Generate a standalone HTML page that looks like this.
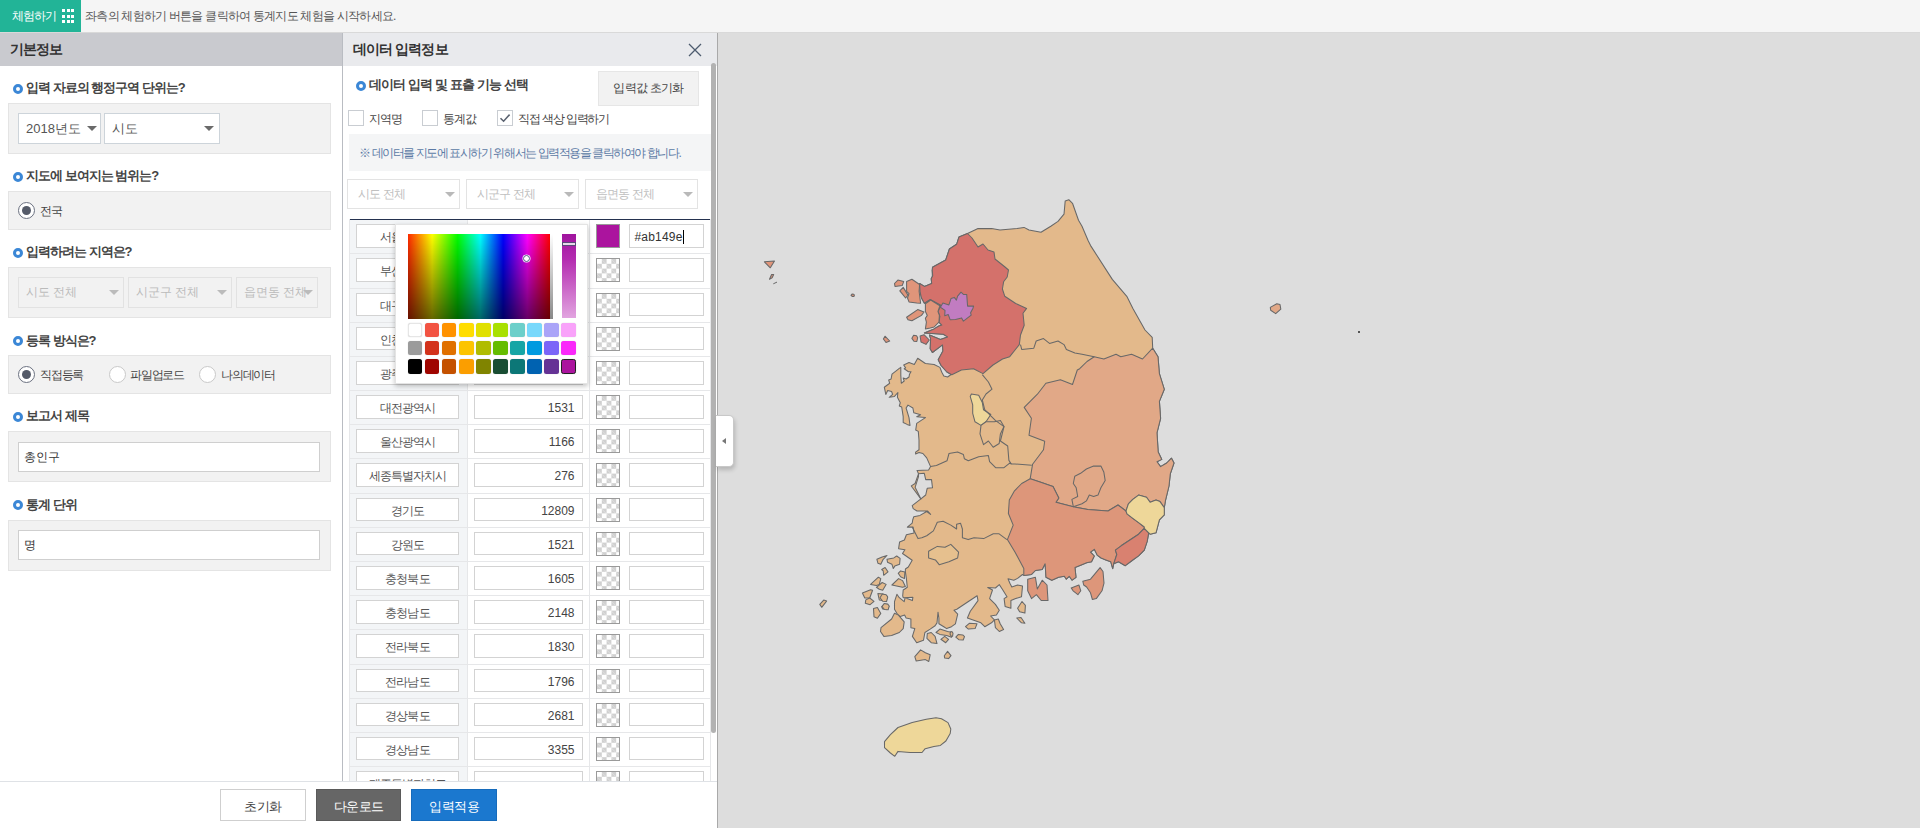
<!DOCTYPE html>
<html><head><meta charset="utf-8">
<style>
*{box-sizing:border-box;margin:0;padding:0}
html,body{width:1920px;height:828px;overflow:hidden;background:#dddddd;font-family:"Liberation Sans",sans-serif;color:#333}
.a{position:absolute}
#top{left:0;top:0;width:1920px;height:33px;background:#f5f5f5;border-bottom:1px solid #d9d9d9}
#exp{left:0;top:0;width:81px;height:32px;background:#22b497;color:#fff;font-size:12px;line-height:32px;padding-left:12px;letter-spacing:-1px}
.g{width:3px;height:3px;background:#fff}
#msg{left:85px;top:0;line-height:32px;font-size:12px;color:#555;letter-spacing:-0.75px}
#left{left:0;top:33px;width:342px;height:748px;background:#fff}
#lhead{left:0;top:33px;width:342px;height:33px;background:#c9cacf;font-size:14px;font-weight:bold;line-height:33px;padding-left:10px;color:#333;letter-spacing:-0.9px}
#vline{left:342px;top:33px;width:1px;height:748px;background:#b9bcc2}
#data{left:343px;top:33px;width:374px;height:748px;background:#fff}
#dhead{left:343px;top:33px;width:374px;height:33px;background:#e9eaed;font-size:14px;font-weight:bold;line-height:33px;padding-left:10px;color:#333;letter-spacing:-0.9px}
#rline{left:717px;top:33px;width:1px;height:795px;background:#a9a9a9}
.tt{font-size:13px;font-weight:bold;color:#444;letter-spacing:-1px;line-height:16px;white-space:nowrap}
.bul{width:10px;height:10px;border-radius:50%;border:3px solid #3b87d6;background:#fff}
.box{background:#f2f2f2;border:1px solid #e4e4e4}
.sel{background:#fff;border:1px solid #cdd4da;font-size:13px;color:#555;line-height:29px;padding-left:7px;white-space:nowrap}
.sel.dis{background:#f2f2f2;border-color:#e2e2e2;color:#bbb}
.arr{width:0;height:0;border-left:5px solid transparent;border-right:5px solid transparent;border-top:5.5px solid #6a6a6a;margin-left:-1px}
.dis .arr{border-top-color:#bbb}
.rad{width:17px;height:17px;border-radius:50%;border:1px solid #c9c9c9;background:#fff}
.rad.on{border:1.5px solid #6b7180}
.rad.on::after{content:"";position:absolute;left:2.5px;top:2.5px;width:9px;height:9px;border-radius:50%;background:#555b69}
.lbl{font-size:12px;color:#444;line-height:14px;white-space:nowrap;letter-spacing:-1.2px}
.inp{background:#fff;border:1px solid #cfcfcf;font-size:12px;color:#333;line-height:28px;padding-left:5px}
#bot{left:0;top:781px;width:717px;height:47px;background:#fff;border-top:1px solid #dfe2e6}
.btn{height:32px;font-size:13px;line-height:33px;text-align:center;letter-spacing:-0.5px}
.chk{width:16.4px;height:16px;background:#fff;border:1px solid #c9cdd2}
.dis2{background:#fff;border-color:#e3e3e3;color:#c0c0c0;font-size:12px;padding-left:10px;letter-spacing:-0.8px}
.dis2 .arr{border-top-color:#b9b9b9}
.cell{height:23.6px;background:#fff;border:1px solid #d3d3d3;font-size:12px;line-height:24px;text-align:center;color:#555;letter-spacing:-0.9px;white-space:nowrap;overflow:hidden}
.num{text-align:right;padding-right:7px;letter-spacing:0;color:#444;line-height:25.5px}
.chq{width:24px;height:24px;border:1px solid #9a9a9a;background-color:#fff;background-image:linear-gradient(45deg,#d0d0d0 25%,transparent 25%,transparent 75%,#d0d0d0 75%),linear-gradient(45deg,#d0d0d0 25%,transparent 25%,transparent 75%,#d0d0d0 75%);background-size:9.6px 9.6px;background-position:0 0,4.8px 4.8px}
</style></head><body>
<div id="top" class="a"></div>
<div id="exp" class="a">체험하기</div>
<div class="a g" style="left:62px;top:9px"></div><div class="a g" style="left:66.7px;top:9px"></div><div class="a g" style="left:71.4px;top:9px"></div>
<div class="a g" style="left:62px;top:14.7px"></div><div class="a g" style="left:66.7px;top:14.7px"></div><div class="a g" style="left:71.4px;top:14.7px"></div>
<div class="a g" style="left:62px;top:20.3px"></div><div class="a g" style="left:66.7px;top:20.3px"></div><div class="a g" style="left:71.4px;top:20.3px"></div>
<div id="msg" class="a">좌측의 체험하기 버튼을 클릭하여 통계지도 체험을 시작하세요.</div>

<div id="left" class="a"></div>
<div id="lhead" class="a">기본정보</div>
<div id="vline" class="a"></div>

<!-- section 1 -->
<div class="a bul" style="left:13px;top:83.5px"></div>
<div class="a tt" style="left:26px;top:80px">입력 자료의 행정구역 단위는?</div>
<div class="a box" style="left:8px;top:103px;width:323px;height:51px"></div>
<div class="a sel" style="left:18px;top:113px;width:83px;height:31px">2018년도<div class="a arr" style="left:69px;top:12px"></div></div>
<div class="a sel" style="left:104px;top:113px;width:116px;height:31px">시도<div class="a arr" style="left:100px;top:12px"></div></div>

<!-- section 2 -->
<div class="a bul" style="left:13px;top:171.5px"></div>
<div class="a tt" style="left:26px;top:168px">지도에 보여지는 범위는?</div>
<div class="a box" style="left:8px;top:191px;width:323px;height:39px"></div>
<div class="a rad on" style="left:18px;top:202px"></div>
<div class="a lbl" style="left:40px;top:204px">전국</div>

<!-- section 3 -->
<div class="a bul" style="left:13px;top:247.5px"></div>
<div class="a tt" style="left:26px;top:244px">입력하려는 지역은?</div>
<div class="a box" style="left:8px;top:267px;width:323px;height:51px"></div>
<div class="a sel dis" style="left:18px;top:277px;width:106px;height:31px;font-size:12px">시도 전체<div class="a arr" style="left:91px;top:12px"></div></div>
<div class="a sel dis" style="left:128px;top:277px;width:104px;height:31px;font-size:12px">시군구 전체<div class="a arr" style="left:89px;top:12px"></div></div>
<div class="a sel dis" style="left:236px;top:277px;width:82px;height:31px;font-size:12px">읍면동 전체<div class="a arr" style="left:67px;top:12px"></div></div>

<!-- section 4 -->
<div class="a bul" style="left:13px;top:336px"></div>
<div class="a tt" style="left:26px;top:333px">등록 방식은?</div>
<div class="a box" style="left:8px;top:355px;width:323px;height:39px"></div>
<div class="a rad on" style="left:18px;top:366px"></div>
<div class="a lbl" style="left:40px;top:368px">직접등록</div>
<div class="a rad" style="left:109px;top:366px"></div>
<div class="a lbl" style="left:130px;top:368px">파일업로드</div>
<div class="a rad" style="left:199px;top:366px"></div>
<div class="a lbl" style="left:221px;top:368px">나의데이터</div>

<!-- section 5 -->
<div class="a bul" style="left:13px;top:411.5px"></div>
<div class="a tt" style="left:26px;top:408px">보고서 제목</div>
<div class="a box" style="left:8px;top:431px;width:323px;height:51px"></div>
<div class="a inp" style="left:18px;top:442px;width:302px;height:30px">총인구</div>

<!-- section 6 -->
<div class="a bul" style="left:13px;top:500px"></div>
<div class="a tt" style="left:26px;top:497px">통계 단위</div>
<div class="a box" style="left:8px;top:520px;width:323px;height:51px"></div>
<div class="a inp" style="left:18px;top:530px;width:302px;height:30px">명</div>

<!-- DATA PANEL -->
<div id="data" class="a"></div>
<div id="dhead" class="a">데이터 입력정보</div>
<div id="rline" class="a"></div>
<!--DATA-->
<div class="a bul" style="left:356px;top:80.6px"></div>
<div class="a tt" style="left:368.5px;top:77px;letter-spacing:-0.85px">데이터 입력 및 표출 기능 선택</div>
<div class="a btn" style="left:598px;top:71px;width:101px;height:35px;line-height:33px;background:#f2f2f2;border:1px solid #e6e6e6;color:#444;font-size:12px;letter-spacing:-0.7px">입력값 초기화</div>
<div class="a chk" style="left:348px;top:110px"></div>
<div class="a lbl" style="left:369px;top:112px">지역명</div>
<div class="a chk" style="left:422px;top:110px"></div>
<div class="a lbl" style="left:443.4px;top:112px">통계값</div>
<div class="a chk" style="left:497px;top:110px"></div>
<svg class="a" style="left:497px;top:110px" width="16" height="16"><path d="M3.5 8.2 L6.6 11.2 L12.6 4.6" fill="none" stroke="#5a6270" stroke-width="1.6"/></svg>
<div class="a lbl" style="left:518.3px;top:112px">직접 색상 입력하기</div>
<div class="a" style="left:349px;top:134.4px;width:362px;height:36.2px;background:#f4f5f6"></div>
<div class="a lbl" style="left:359.3px;top:146px;color:#5b7aa5;letter-spacing:-1.45px">※ 데이터를 지도에 표시하기 위해서는 입력적용을 클릭하여야 합니다.</div>
<div class="a sel dis2" style="left:347px;top:179.3px;width:113px;height:30.2px">시도 전체<div class="a arr" style="left:98px;top:12px"></div></div>
<div class="a sel dis2" style="left:466px;top:179.3px;width:113px;height:30.2px">시군구 전체<div class="a arr" style="left:98px;top:12px"></div></div>
<div class="a sel dis2" style="left:584.5px;top:179.3px;width:113px;height:30.2px">읍면동 전체<div class="a arr" style="left:98px;top:12px"></div></div>
<div class="a" style="left:349px;top:219.2px;width:362px;height:562px;background:#fff;border-left:1px solid #e6e7e9;border-right:1px solid #e6e7e9;overflow:hidden">
<div class="a" style="left:0;top:0;width:117px;height:600px;background:#f3f5f7"></div>
<div class="a" style="left:117px;top:0;width:1px;height:600px;background:#e6e7e9"></div>
<div class="a" style="left:239px;top:0;width:1px;height:600px;background:#e6e7e9"></div>
<div class="a" style="left:0;top:0;width:362px;height:1.3px;background:#24324f"></div>
<div class="a cell" style="left:6.3px;top:5.00px;width:102.4px">서울특별시</div>
<div class="a cell num" style="left:123.5px;top:5.00px;width:109px"></div>
<div class="a" style="left:246px;top:5.00px;width:24px;height:24px;background:#ab149e;border:1px solid #999"></div>
<div class="a cell" style="left:278.5px;top:5.00px;width:75.5px;text-align:left;padding-left:5px;color:#333;letter-spacing:0.2px;line-height:24px">#ab149e<span style="display:inline-block;width:1px;height:14px;background:#000;vertical-align:-3px"></span></div>
<div class="a" style="left:0;top:34.18px;width:362px;height:1px;background:#e6e7e9"></div>
<div class="a cell" style="left:6.3px;top:39.18px;width:102.4px">부산광역시</div>
<div class="a cell num" style="left:123.5px;top:39.18px;width:109px"></div>
<div class="a chq" style="left:246px;top:39.18px"></div>
<div class="a cell" style="left:278.5px;top:39.18px;width:75.5px"></div>
<div class="a" style="left:0;top:68.36px;width:362px;height:1px;background:#e6e7e9"></div>
<div class="a cell" style="left:6.3px;top:73.36px;width:102.4px">대구광역시</div>
<div class="a cell num" style="left:123.5px;top:73.36px;width:109px"></div>
<div class="a chq" style="left:246px;top:73.36px"></div>
<div class="a cell" style="left:278.5px;top:73.36px;width:75.5px"></div>
<div class="a" style="left:0;top:102.54px;width:362px;height:1px;background:#e6e7e9"></div>
<div class="a cell" style="left:6.3px;top:107.54px;width:102.4px">인천광역시</div>
<div class="a cell num" style="left:123.5px;top:107.54px;width:109px"></div>
<div class="a chq" style="left:246px;top:107.54px"></div>
<div class="a cell" style="left:278.5px;top:107.54px;width:75.5px"></div>
<div class="a" style="left:0;top:136.72px;width:362px;height:1px;background:#e6e7e9"></div>
<div class="a cell" style="left:6.3px;top:141.72px;width:102.4px">광주광역시</div>
<div class="a cell num" style="left:123.5px;top:141.72px;width:109px"></div>
<div class="a chq" style="left:246px;top:141.72px"></div>
<div class="a cell" style="left:278.5px;top:141.72px;width:75.5px"></div>
<div class="a" style="left:0;top:170.90px;width:362px;height:1px;background:#e6e7e9"></div>
<div class="a cell" style="left:6.3px;top:175.90px;width:102.4px">대전광역시</div>
<div class="a cell num" style="left:123.5px;top:175.90px;width:109px">1531</div>
<div class="a chq" style="left:246px;top:175.90px"></div>
<div class="a cell" style="left:278.5px;top:175.90px;width:75.5px"></div>
<div class="a" style="left:0;top:205.08px;width:362px;height:1px;background:#e6e7e9"></div>
<div class="a cell" style="left:6.3px;top:210.08px;width:102.4px">울산광역시</div>
<div class="a cell num" style="left:123.5px;top:210.08px;width:109px">1166</div>
<div class="a chq" style="left:246px;top:210.08px"></div>
<div class="a cell" style="left:278.5px;top:210.08px;width:75.5px"></div>
<div class="a" style="left:0;top:239.26px;width:362px;height:1px;background:#e6e7e9"></div>
<div class="a cell" style="left:6.3px;top:244.26px;width:102.4px">세종특별자치시</div>
<div class="a cell num" style="left:123.5px;top:244.26px;width:109px">276</div>
<div class="a chq" style="left:246px;top:244.26px"></div>
<div class="a cell" style="left:278.5px;top:244.26px;width:75.5px"></div>
<div class="a" style="left:0;top:273.44px;width:362px;height:1px;background:#e6e7e9"></div>
<div class="a cell" style="left:6.3px;top:278.44px;width:102.4px">경기도</div>
<div class="a cell num" style="left:123.5px;top:278.44px;width:109px">12809</div>
<div class="a chq" style="left:246px;top:278.44px"></div>
<div class="a cell" style="left:278.5px;top:278.44px;width:75.5px"></div>
<div class="a" style="left:0;top:307.62px;width:362px;height:1px;background:#e6e7e9"></div>
<div class="a cell" style="left:6.3px;top:312.62px;width:102.4px">강원도</div>
<div class="a cell num" style="left:123.5px;top:312.62px;width:109px">1521</div>
<div class="a chq" style="left:246px;top:312.62px"></div>
<div class="a cell" style="left:278.5px;top:312.62px;width:75.5px"></div>
<div class="a" style="left:0;top:341.80px;width:362px;height:1px;background:#e6e7e9"></div>
<div class="a cell" style="left:6.3px;top:346.80px;width:102.4px">충청북도</div>
<div class="a cell num" style="left:123.5px;top:346.80px;width:109px">1605</div>
<div class="a chq" style="left:246px;top:346.80px"></div>
<div class="a cell" style="left:278.5px;top:346.80px;width:75.5px"></div>
<div class="a" style="left:0;top:375.98px;width:362px;height:1px;background:#e6e7e9"></div>
<div class="a cell" style="left:6.3px;top:380.98px;width:102.4px">충청남도</div>
<div class="a cell num" style="left:123.5px;top:380.98px;width:109px">2148</div>
<div class="a chq" style="left:246px;top:380.98px"></div>
<div class="a cell" style="left:278.5px;top:380.98px;width:75.5px"></div>
<div class="a" style="left:0;top:410.16px;width:362px;height:1px;background:#e6e7e9"></div>
<div class="a cell" style="left:6.3px;top:415.16px;width:102.4px">전라북도</div>
<div class="a cell num" style="left:123.5px;top:415.16px;width:109px">1830</div>
<div class="a chq" style="left:246px;top:415.16px"></div>
<div class="a cell" style="left:278.5px;top:415.16px;width:75.5px"></div>
<div class="a" style="left:0;top:444.34px;width:362px;height:1px;background:#e6e7e9"></div>
<div class="a cell" style="left:6.3px;top:449.34px;width:102.4px">전라남도</div>
<div class="a cell num" style="left:123.5px;top:449.34px;width:109px">1796</div>
<div class="a chq" style="left:246px;top:449.34px"></div>
<div class="a cell" style="left:278.5px;top:449.34px;width:75.5px"></div>
<div class="a" style="left:0;top:478.52px;width:362px;height:1px;background:#e6e7e9"></div>
<div class="a cell" style="left:6.3px;top:483.52px;width:102.4px">경상북도</div>
<div class="a cell num" style="left:123.5px;top:483.52px;width:109px">2681</div>
<div class="a chq" style="left:246px;top:483.52px"></div>
<div class="a cell" style="left:278.5px;top:483.52px;width:75.5px"></div>
<div class="a" style="left:0;top:512.70px;width:362px;height:1px;background:#e6e7e9"></div>
<div class="a cell" style="left:6.3px;top:517.70px;width:102.4px">경상남도</div>
<div class="a cell num" style="left:123.5px;top:517.70px;width:109px">3355</div>
<div class="a chq" style="left:246px;top:517.70px"></div>
<div class="a cell" style="left:278.5px;top:517.70px;width:75.5px"></div>
<div class="a" style="left:0;top:546.88px;width:362px;height:1px;background:#e6e7e9"></div>
<div class="a cell" style="left:6.3px;top:551.88px;width:102.4px">제주특별자치도</div>
<div class="a cell num" style="left:123.5px;top:551.88px;width:109px"></div>
<div class="a chq" style="left:246px;top:551.88px"></div>
<div class="a cell" style="left:278.5px;top:551.88px;width:75.5px"></div>
</div>
<div class="a" style="left:711.2px;top:63px;width:4.8px;height:670px;background:#b2b2b2;border-radius:3px"></div>
<div class="a" style="left:716px;top:414.5px;width:17.8px;height:52px;background:#fff;border:1px solid #c8c8c8;border-left:none;border-radius:0 5px 5px 0;box-shadow:1px 3px 4px rgba(0,0,0,0.18)"></div>
<div class="a" style="left:721.5px;top:437.5px;width:0;height:0;border-top:3.5px solid transparent;border-bottom:3.5px solid transparent;border-right:4px solid #777"></div>
<svg class="a" style="left:688px;top:43px" width="14" height="14"><path d="M1 1L13 13M13 1L1 13" stroke="#4d5b6e" stroke-width="1.3"/></svg>
<div class="a" style="left:395px;top:224.2px;width:192.5px;height:160px;background:#fff;border:1px solid #e4e4e4;box-shadow:0 2px 5px rgba(0,0,0,0.25)"></div>
<div class="a" style="left:407.7px;top:233.6px;width:142.3px;height:85px;background:linear-gradient(to bottom,rgba(0,0,0,0),rgba(0,0,0,0.6)),linear-gradient(to right,#ff2a00 0%,#ffff00 17%,#00ff00 35%,#00ffff 51%,#0000ff 67%,#ff00ff 84%,#ff0000 100%)"></div>
<div class="a" style="left:550px;top:233.6px;width:2.5px;height:85px;background:linear-gradient(to bottom,#fff,#888)"></div>
<div class="a" style="left:523.4px;top:255.3px;width:7px;height:7px;border-radius:50%;border:1.5px solid #5a4a8a;background:#fff;box-shadow:0 0 0 0.5px #fff"></div>
<div class="a" style="left:561.9px;top:233.6px;width:14px;height:84.4px;background:linear-gradient(to bottom,#a0149e,#b42cb0 30%,#e2a4e0)"></div>
<div class="a" style="left:561.5px;top:242.3px;width:14.8px;height:3.4px;background:#e8d8ea;border:1px solid #5a4a7a"></div>
<div class="a" style="left:407.70px;top:322.9px;width:14.6px;height:14.6px;border-radius:2.5px;background:#ffffff;box-shadow:0 0 1px rgba(0,0,0,0.25);border:1px solid #e6e6e6;"></div>
<div class="a" style="left:424.78px;top:322.9px;width:14.6px;height:14.6px;border-radius:2.5px;background:#f25342;box-shadow:0 0 1px rgba(0,0,0,0.25);"></div>
<div class="a" style="left:441.86px;top:322.9px;width:14.6px;height:14.6px;border-radius:2.5px;background:#ff9200;box-shadow:0 0 1px rgba(0,0,0,0.25);"></div>
<div class="a" style="left:458.94px;top:322.9px;width:14.6px;height:14.6px;border-radius:2.5px;background:#ffdd00;box-shadow:0 0 1px rgba(0,0,0,0.25);"></div>
<div class="a" style="left:476.02px;top:322.9px;width:14.6px;height:14.6px;border-radius:2.5px;background:#e0e000;box-shadow:0 0 1px rgba(0,0,0,0.25);"></div>
<div class="a" style="left:493.10px;top:322.9px;width:14.6px;height:14.6px;border-radius:2.5px;background:#a8e000;box-shadow:0 0 1px rgba(0,0,0,0.25);"></div>
<div class="a" style="left:510.18px;top:322.9px;width:14.6px;height:14.6px;border-radius:2.5px;background:#6ccfca;box-shadow:0 0 1px rgba(0,0,0,0.25);"></div>
<div class="a" style="left:527.26px;top:322.9px;width:14.6px;height:14.6px;border-radius:2.5px;background:#78d8fb;box-shadow:0 0 1px rgba(0,0,0,0.25);"></div>
<div class="a" style="left:544.34px;top:322.9px;width:14.6px;height:14.6px;border-radius:2.5px;background:#aaa4f8;box-shadow:0 0 1px rgba(0,0,0,0.25);"></div>
<div class="a" style="left:561.42px;top:322.9px;width:14.6px;height:14.6px;border-radius:2.5px;background:#f9a2fa;box-shadow:0 0 1px rgba(0,0,0,0.25);"></div>
<div class="a" style="left:407.70px;top:340.8px;width:14.6px;height:14.6px;border-radius:2.5px;background:#9b9b9b;box-shadow:0 0 1px rgba(0,0,0,0.25);"></div>
<div class="a" style="left:424.78px;top:340.8px;width:14.6px;height:14.6px;border-radius:2.5px;background:#d3321b;box-shadow:0 0 1px rgba(0,0,0,0.25);"></div>
<div class="a" style="left:441.86px;top:340.8px;width:14.6px;height:14.6px;border-radius:2.5px;background:#e07000;box-shadow:0 0 1px rgba(0,0,0,0.25);"></div>
<div class="a" style="left:458.94px;top:340.8px;width:14.6px;height:14.6px;border-radius:2.5px;background:#fcc400;box-shadow:0 0 1px rgba(0,0,0,0.25);"></div>
<div class="a" style="left:476.02px;top:340.8px;width:14.6px;height:14.6px;border-radius:2.5px;background:#b0bc00;box-shadow:0 0 1px rgba(0,0,0,0.25);"></div>
<div class="a" style="left:493.10px;top:340.8px;width:14.6px;height:14.6px;border-radius:2.5px;background:#64bc00;box-shadow:0 0 1px rgba(0,0,0,0.25);"></div>
<div class="a" style="left:510.18px;top:340.8px;width:14.6px;height:14.6px;border-radius:2.5px;background:#16a5a5;box-shadow:0 0 1px rgba(0,0,0,0.25);"></div>
<div class="a" style="left:527.26px;top:340.8px;width:14.6px;height:14.6px;border-radius:2.5px;background:#009ae0;box-shadow:0 0 1px rgba(0,0,0,0.25);"></div>
<div class="a" style="left:544.34px;top:340.8px;width:14.6px;height:14.6px;border-radius:2.5px;background:#7b65f8;box-shadow:0 0 1px rgba(0,0,0,0.25);"></div>
<div class="a" style="left:561.42px;top:340.8px;width:14.6px;height:14.6px;border-radius:2.5px;background:#fa28fa;box-shadow:0 0 1px rgba(0,0,0,0.25);"></div>
<div class="a" style="left:407.70px;top:359.1px;width:14.6px;height:14.6px;border-radius:2.5px;background:#000000;box-shadow:0 0 1px rgba(0,0,0,0.25);"></div>
<div class="a" style="left:424.78px;top:359.1px;width:14.6px;height:14.6px;border-radius:2.5px;background:#9f0500;box-shadow:0 0 1px rgba(0,0,0,0.25);"></div>
<div class="a" style="left:441.86px;top:359.1px;width:14.6px;height:14.6px;border-radius:2.5px;background:#c45100;box-shadow:0 0 1px rgba(0,0,0,0.25);"></div>
<div class="a" style="left:458.94px;top:359.1px;width:14.6px;height:14.6px;border-radius:2.5px;background:#fb9e00;box-shadow:0 0 1px rgba(0,0,0,0.25);"></div>
<div class="a" style="left:476.02px;top:359.1px;width:14.6px;height:14.6px;border-radius:2.5px;background:#808400;box-shadow:0 0 1px rgba(0,0,0,0.25);"></div>
<div class="a" style="left:493.10px;top:359.1px;width:14.6px;height:14.6px;border-radius:2.5px;background:#194d33;box-shadow:0 0 1px rgba(0,0,0,0.25);"></div>
<div class="a" style="left:510.18px;top:359.1px;width:14.6px;height:14.6px;border-radius:2.5px;background:#0c7777;box-shadow:0 0 1px rgba(0,0,0,0.25);"></div>
<div class="a" style="left:527.26px;top:359.1px;width:14.6px;height:14.6px;border-radius:2.5px;background:#0062b1;box-shadow:0 0 1px rgba(0,0,0,0.25);"></div>
<div class="a" style="left:544.34px;top:359.1px;width:14.6px;height:14.6px;border-radius:2.5px;background:#653295;box-shadow:0 0 1px rgba(0,0,0,0.25);"></div>
<div class="a" style="left:561.42px;top:359.1px;width:14.6px;height:14.6px;border-radius:2.5px;background:#ab149e;box-shadow:0 0 1px rgba(0,0,0,0.25);border:1.5px solid #222;"></div>
<!--/DATA-->

<div id="bot" class="a"></div>
<div class="a btn" style="left:220px;top:789px;width:86px;background:#fff;border:1px solid #cfcfcf;color:#444">초기화</div>
<div class="a btn" style="left:316px;top:789px;width:85px;background:#666;color:#fff;border:1px solid #5a5a5a">다운로드</div>
<div class="a btn" style="left:411px;top:789px;width:86px;background:#1b78cf;color:#fff;border:1px solid #166bbb">입력적용</div>

<!--MAP-->
<svg class="a" style="left:0;top:0" width="1920" height="828" viewBox="0 0 1920 828"><g stroke="#686868" stroke-width="1.05" stroke-linejoin="round">
<polygon points="932.5,283 932.5,267.3 945.7,260 949.4,249 956.6,244.3 959,237 967.5,233.5 978,228.6 991.6,228.6 1000,230 1017,228.6 1024,227.4 1029,230 1041,232.3 1050.8,226.2 1058,221.4 1064,214.2 1065.2,200.9 1068.8,199.7 1072.5,203.3 1078.5,220.2 1082,226.2 1088.2,240.7 1090.6,245.6 1112.3,279.4 1126.8,296.3 1132.9,308.4 1145,330 1152.2,337.3 1152.7,348.2 1158,356.7 1159.4,373.6 1164.3,389.3 1159.4,401.4 1160.6,418.3 1157,432.8 1158.2,452.1 1161.8,459.4 1157,461.8 1160.6,466.6 1166.7,463 1171.5,458.2 1174,463 1170.3,473.9 1169,486 1165.5,500.4 1164.3,507.7 1164.3,514.9 1159.4,519.8 1156,532.8 1150.1,534.2 1148.7,532.8 1147.2,541.4 1144.3,550.1 1138.6,555.9 1132.8,560 1125.3,565.7 1118.5,561.8 1113.7,563.8 1112.7,568.6 1110.8,561.8 1105.9,559.9 1101.1,558 1097.2,555.1 1094.3,549.3 1090.5,552.2 1094.3,556 1091.5,561.8 1086.6,562.8 1081.8,564.7 1075,567.6 1076,577.3 1072.1,580.2 1069.2,576.3 1066.3,579.2 1064.4,576.3 1058.6,577.3 1051.8,580.2 1046,577.3 1045.1,563.8 1042.2,569.6 1035.4,570.5 1031.5,574.4 1023.8,575.4 1022.5,574.5 1017.6,578.4 1013.8,580.3 1008,578.8 1009.9,583.2 1011.8,587 1017.6,585.1 1022.5,586.1 1021.5,596.7 1015.7,598.6 1010.9,600.6 1010.9,608.3 1005.1,606.4 1004.1,598.6 1007,596.7 1002.2,589 999.3,584.6 995.4,588 987.7,587.5 992.5,590 989.6,598.6 995.4,604.4 999.3,610.2 996.4,615.1 990.6,616 994.4,619.9 991.5,622.8 984.8,626.7 980.9,622.8 967.4,618 970.3,611.2 978,600.6 977.1,595.7 968.4,601.5 956.8,609.3 953.9,610.2 957.7,614.1 955.4,623.8 951.5,626.7 946.7,628.6 943.8,626.7 938.9,623.8 938.9,618 938,612.2 937,622.9 935.1,625.7 930.2,629.1 924.9,632.5 923.5,640.2 916.7,642.7 912.4,636.4 914.8,628.6 910.9,627.7 910.9,619 906.1,618 904.6,615.1 900.3,616.6 897.4,614.2 894.5,609.3 894.5,601.6 896.9,594.3 899.3,597.7 904.2,601.6 905.1,597.7 912.4,600.6 912.9,597.2 903.2,597.7 902.7,595.8 903.2,590 904.4,589.3 907.3,587.3 906.4,578.6 905.4,571.9 905.4,569 908.3,567 912.2,560.3 902.5,553.5 904.9,549.7 898.6,548.7 899.6,541.9 904.4,540 906.4,534.8 914.1,532.9 913.1,527.1 907.3,527.1 912.2,523.2 912.7,520 913.7,516.8 920,515.4 926.7,511.5 930.6,514.4 927.7,511 917,511 913.2,508.6 912.2,505.7 920.9,498.9 912.2,487.3 911.3,485.9 915.1,483.5 918.5,473.8 917,470.4 928.6,470 930.6,466.6 926.7,457.9 922.9,453.5 919,452.6 915.6,454 915.6,452.1 919,449.7 919,440 918.3,431.4 915.7,430 916.7,423.4 925.4,417.6 916.7,416.7 920.6,414.7 913.8,412.8 912.9,408 908,405.1 906.1,408 909,417.6 910,425.4 907.1,424.4 903.2,422.5 903.2,416.7 901.7,407 899.3,406 900.3,402.7 897.4,397.3 897.9,392.5 894.5,396.4 889.2,397.3 892.6,394.4 891.6,391.5 887.7,390.6 885.8,394.4 884.3,387.2 889.7,383.3 888.7,380 891.1,379 892,374.2 899.3,368.4 900.8,367.4 900.8,375.1 901.3,383.3 904.2,381 903.2,378 906.1,379 909,377 909.5,374.2 911,371.7 908.5,371.7 904.2,368.8 905.6,367.9 903.7,365 909,362.6 914.3,364.5 917.7,358.2 925.4,363.5 934.1,364.5 939.9,367.4 941.8,372.2 943.8,376.1 947.6,377 951.5,374.2 952,373.5 951.2,374.2 946.9,372 941.1,365.5 938.2,359.7 942.9,351 942.5,344.9 932.4,352.5 930.2,348.8 930.6,338.7 929.5,335.1 940.4,339.4 947.6,336.9 943.3,334.3 924.4,332.9 934.1,328.9 938.9,326 941.8,325.1 938.9,322.2 939.9,316.4 938,311.5 940.9,305.3 930.2,299.5 924.4,303.3 921.5,298 920.1,292.2 919.6,283.5 924.4,286.4 931.7,283.5 931.2,278.7 932.7,275.8 932.2,270" fill="#e3b98b"/>
<polygon points="1094.2,356.7 1103.9,359 1116,354.3 1120.8,356.7 1131.6,354.3 1142.5,359 1152.7,348.2 1158,356.7 1159.4,373.6 1164.3,389.3 1159.4,401.4 1160.6,418.3 1157,432.8 1158.2,452.1 1161.8,459.4 1157,461.8 1160.6,466.6 1166.7,463 1171.5,458.2 1174,463 1170.3,473.9 1169,486 1165.5,500.4 1164.3,507.7 1160,501.6 1156,500.1 1150.1,502.3 1146.5,497.2 1138.6,495.1 1132.8,499.4 1128.4,503.8 1126,511 1118,505 1108,511 1087.8,509.6 1073.3,506.7 1061.7,503.8 1056,502.3 1058.8,498 1053,486.4 1040,482 1030.2,478.7 1031.4,471.4 1032.6,464.2 1043.5,449.7 1044.7,441.3 1029,435.2 1031.4,418.3 1024.2,407.4 1030.2,401.4 1037.4,394.2 1045.9,383.3 1060.4,379.7 1072.5,384.5 1077.3,370 1079.7,368.7 1087,361.5" fill="#e1a887"/>
<polygon points="1030.2,478.7 1040,482 1053,486.4 1058.8,498 1056,502.3 1061.7,503.8 1073.3,506.7 1087.8,509.6 1108,511 1118,505 1126,511 1127,513.9 1132.8,518.3 1138.6,522.6 1144.3,527 1144.3,528.4 1138.6,534.2 1129.9,540 1121.2,545.8 1115.4,550.1 1116.8,554.5 1113.7,563.8 1112.7,568.6 1110.8,561.8 1105.9,559.9 1101.1,558 1097.2,555.1 1094.3,549.3 1090.5,552.2 1094.3,556 1091.5,561.8 1086.6,562.8 1081.8,564.7 1075,567.6 1076,577.3 1072.1,580.2 1069.2,576.3 1066.3,579.2 1064.4,576.3 1058.6,577.3 1051.8,580.2 1046,577.3 1045.1,563.8 1042.2,569.6 1035.4,570.5 1031.5,574.4 1023.8,575.4 1023.8,568.6 1015.1,552.2 1007.4,539.6 1013.2,525.1 1008.4,513.5 1009.3,500 1014.5,490.8 1021.7,483.5" fill="#dd967a"/>
<polygon points="1144.3,528.4 1148.7,532.8 1147.2,541.4 1144.3,550.1 1138.6,555.9 1132.8,560 1125.3,565.7 1118.5,561.8 1113.7,563.8 1116.8,554.5 1115.4,550.1 1121.2,545.8 1129.9,540 1138.6,534.2" fill="#d98170"/>
<polygon points="1164.3,507.7 1160,501.6 1156,500.1 1150.1,502.3 1146.5,497.2 1138.6,495.1 1132.8,499.4 1128.4,503.8 1126,511 1127,513.9 1132.8,518.3 1138.6,522.6 1144.3,527 1144.3,528.4 1148.7,532.8 1150.1,534.2 1156,532.8 1159.4,519.8 1164.3,514.9" fill="#eed799"/>
<polygon points="932.2,270 932.5,267.3 945.7,260 949.4,249 956.6,244.3 959,237 967.5,233.5 972,238 978,247 983,244 988,250 994,252 995,259 1005,267 1008.5,270 1007.2,277 1003.6,281.8 1002.4,289 1004.8,296.3 1015.7,303.5 1026.6,308.4 1023,313.2 1024.2,325.3 1020.5,335 1019.3,344.6 1009.7,356.7 1002.5,359 993,365 983,373.6 973.5,368.7 961.4,370 951.8,374.8 946.9,372 941.1,365.5 938.2,359.7 942.9,351 942.5,344.9 932.4,352.5 930.2,348.8 930.6,338.7 929.5,335.1 940.4,339.4 947.6,336.9 943.3,334.3 924.4,332.9 934.1,328.9 938.9,326 941.8,325.1 938.9,322.2 939.9,316.4 938,311.5 940.9,305.3 930.2,299.5 924.4,303.3 921.5,298 920.1,292.2 919.6,283.5 924.4,286.4 931.7,283.5 931.2,278.7 932.7,275.8 932.2,270" fill="#d4716b"/>
<polygon points="940.4,307.3 942.9,303.1 948.9,304.9 951,298.6 954.3,297.4 956.4,300.1 957.6,296.2 961,292.2 963.4,294.4 966.7,294.4 967.6,306.1 973.6,306.1 973,308.2 970.6,312.8 971.2,315.2 963.4,321.2 961.6,317.9 955.5,319.4 950.1,319.7 948.3,314.6 944.7,315.8 945,310.4" fill="#c17cc1"/>
<polygon points="925.4,303.8 930.7,300 939.9,305.7 938,311.5 939.4,315.4 938.9,322.2 934.1,327 930.2,328 925.4,328.9 926.4,322.2 925.4,318.3 927.3,315.4 925.4,311.5" fill="#e0957a"/>
<polygon points="971.4,394 978.7,395.2 982.3,402.5 983.5,409.7 990.8,414.5 986,421.8 981,425.4 975,421.8 972.7,413.3 972.7,404.9 970.2,396.4" fill="#eed799"/>
<polygon points="981,425.4 986,421.8 994.4,421.8 1000.4,420.6 1004,426.6 1000.4,433.9 999.2,443.5 993.2,447.2 988.4,441 983.5,444.7 980,433.9" fill="#e3b98b"/>
<polygon points="928.6,551.2 937.3,546.4 945,547.3 950.8,544.4 958.6,552.2 957.6,558 948.9,561.8 939.2,564.7 935.4,559.9 928.6,558" fill="#e6c08e"/>
<polygon points="1073.3,483.5 1074.8,476.2 1080.6,473.3 1086.4,469 1093.6,466.1 1100.9,466.1 1103.8,471.9 1105.2,480.6 1100.9,487.8 1098,495.1 1093.6,496.5 1089.3,495.1 1086.4,500.9 1082,503.8 1073.3,506.7 1071.9,499.4 1077.7,496.5 1076.2,487.8" fill="#e1a887"/>
<polygon points="884.5,741.6 890.4,734.6 898,727.5 912.2,722.6 926.3,719.3 936,717.7 941.5,718.8 948,722.6 950.8,729 950.2,733.5 945.9,741 940.4,745.4 933.9,746.5 925.2,748.7 922,752.5 910,752.5 898,751.4 894.8,756.3 890.4,753 884.5,747.6" fill="#eed799"/>
<polygon points="1270.3,307.4 1276.8,303.8 1280,304.5 1280.8,309.2 1275.7,313.6 1270.7,310.3" fill="#e1a887"/>
<polygon points="918.5,473.8 924.3,473.3 925.7,479.6 931.5,479.6 932.5,487.8 927.2,488.3 925.7,495 920.9,498.9 915.1,487.3 918.5,476.7" fill="#dddddd"/>
<polyline points="1020.5,344.6 1021.7,349.4 1033.8,348.2 1036.2,341 1043.5,338.6 1049.5,343.4 1058,341 1064,344.6 1066.4,349.4 1074.9,353 1082,354.3 1094.2,356.7" fill="none"/>
<polyline points="982.3,374.7 988.4,382 992,389.2 986,394 982.3,400 984.7,409.7 990.8,415.8 995.6,420.6 1004,426.6 1000.4,441 1007.7,446 1008.9,460.4 1011.3,464 1014.9,464 1031.8,465.3" fill="none"/>
<polyline points="930.6,466.6 936.4,465.6 947,460.8 949,453.5 957.6,452.1 963.4,454.5 964.4,458.8 968.3,460.8 978.7,456.8 988.4,455.6 989.6,461.6 995.6,467.7 1004,467.7 1010,462.9 1011.3,464" fill="none"/>
<polyline points="912.2,527 918,538.6 921.8,537.7 926.7,535.7 933.4,530.9 937.3,522.2 943.1,521.3 950.8,525.1 956.6,529 956.6,524.2 960.5,523.2 962.4,529 962.4,537.7 968.2,539.6 974,537.7 983.7,538.6 993.3,533.8 999.1,533.8 1006.9,539.6" fill="none"/>
<polygon points="876.9,559.3 882.2,556.9 887,555.5 883.2,559.3 880.8,564.2 877.9,563.2" fill="#e3b98b"/>
<polygon points="887,559.3 893.8,557.9 896.7,556 900.1,558.4 899.6,564.2 894.8,566.1 893.3,568.5 891.9,564.2 887.5,562.2" fill="#e3b98b"/>
<polygon points="881.7,569.5 885.1,567.5 888,571.9 883.7,575.3 883.2,570.9" fill="#e3b98b"/>
<polygon points="870.6,584.4 878.4,577.2 880.8,578.6 879.3,584.4 876.4,585.4" fill="#e3b98b"/>
<polygon points="876.4,587.3 882.2,582.5 886.1,584.4 882.7,590.2 879.3,589.3" fill="#e3b98b"/>
<polygon points="862.4,593.1 870.6,589.8 872.6,590.2 869.7,598 864.8,598" fill="#e3b98b"/>
<polygon points="865.8,599.9 869.7,598 874,601.4 870.1,604.7 865.3,603.3" fill="#e3b98b"/>
<polygon points="877.9,593.6 883.2,594.1 887.5,596.5 886.1,600.9 879.3,599.9" fill="#e3b98b"/>
<polygon points="881.7,606.7 885.1,604.3 889,606.7 886.1,609.6 882.7,609.1" fill="#e3b98b"/>
<polygon points="873.5,608.6 877.4,607.6 880.8,613.4 877.4,618.3 874,616.8" fill="#e3b98b"/>
<polygon points="891.9,585 898.6,578.6 902.5,580.6 905.4,586.4 902.5,587.3" fill="#e3b98b"/>
<polygon points="898.2,573.3 900.6,570.9 904.9,571.9 904.4,578.6 900.6,576.7" fill="#e3b98b"/>
<polygon points="881,627.7 891.6,619 894.5,613.2 898.4,615.1 904.2,621.9 903.2,628.6 899.3,632.5 891.6,635.4 883.9,636.4 880.5,631.5" fill="#e3b98b"/>
<polygon points="927.3,633.5 931.2,632.5 935.1,636.4 937,643.6 931.2,642.7 926.9,638.3" fill="#e3b98b"/>
<polygon points="936,632.5 939.9,629.1 947.6,631.5 952.5,632.5 951.5,637.3 946.7,635.4 939.9,634.4" fill="#e3b98b"/>
<polygon points="940.9,639.3 944.7,636.4 948.6,639.3 945.7,642.7" fill="#e3b98b"/>
<polygon points="914.8,656.7 920.6,649.9 925.4,652.8 930.2,654.7 928.8,661.5 925.4,659.6 916.2,661" fill="#e3b98b"/>
<polygon points="944.3,655.7 947.6,651.4 951,655.7 948.6,658.6 944.7,658.1" fill="#e3b98b"/>
<polygon points="965.5,626.7 969.3,623.3 977,623.8 975.1,628.6 968.4,629.1" fill="#e3b98b"/>
<polygon points="994.4,620 998.3,619 1000.2,623.8 1003.6,629.6 999.3,631.5 995.4,627.6" fill="#e3b98b"/>
<polygon points="1017.6,608.3 1022,601.5 1025.4,605.4 1024.9,613.1 1019.6,611.7" fill="#e3b98b"/>
<polygon points="1016.7,618 1021,617.5 1024.9,623.3 1021.5,622.8" fill="#e3b98b"/>
<polygon points="950,633.9 950.9,631.5 952.4,631.98 953,633.42 952.55,636.3 951.05,636.06" fill="#e3b98b"/>
<polygon points="955.8,637.2 958.41,634.4 962.76,634.96 964.5,636.6400000000001 963.1949999999999,640 958.845,639.72" fill="#e3b98b"/>
<polygon points="880,597.8 882.3100000000001,594 886.1600000000001,594.76 887.7,597.04 886.5450000000001,601.6 882.695,601.22" fill="#e3b98b"/>
<polygon points="882,606.65 884.16,603.5 887.76,604.13 889.2,606.02 888.12,609.8 884.52,609.4849999999999" fill="#e3b98b"/>
<polygon points="819.8,604.4 823.7,600.1 826.6,601.1 821.7,607.3" fill="#e3b98b"/>
<polygon points="1027.7,579.2 1035.4,577.3 1037.3,588.9 1042.2,580.2 1047,585 1048,600.5 1041.2,600.5 1036.4,594.7 1031.5,598.6 1027.7,590.8" fill="#dd967a"/>
<polygon points="1082.8,581.2 1090.5,579.2 1095.3,573.4 1100.1,567.6 1103,571.5 1104,583.1 1102,590.8 1096.3,598.6 1092.4,599.5 1090.5,592.8 1086.6,587 1083.7,585" fill="#dd967a"/>
<polygon points="1071.2,587.9 1078.9,585 1080.8,590.8 1077.9,594.7 1073.1,590.8" fill="#dd967a"/>
<polygon points="906.6,281.6 911.9,279.2 919.6,284.5 919.1,291.3 920.6,303.3 916.7,302.9 909,301.9 907.5,298 909,293.7 906.6,291.3" fill="#e0957a"/>
<polygon points="894.5,283.5 897.9,280.1 903.7,281.6 902.2,285.5 895,286.4" fill="#e0957a"/>
<polygon points="899.8,290.8 903.2,287.4 908,295.1 905.6,298 901.7,293.2" fill="#e0957a"/>
<polygon points="906.6,317.3 917.7,309.6 924,312 921.5,315.4 911.9,320.7 908,319.8" fill="#e0957a"/>
<polygon points="911.9,338.35 913.64,335.2 916.5400000000001,335.83 917.7,337.72 916.83,341.5 913.93,341.185" fill="#e0957a"/>
<polygon points="883.4,339 885,336.2 889.7,341 886,342.5" fill="#e0957a"/>
<polygon points="764.4,261.8 774.5,261 770.3,267.8" fill="#e0957a"/>
<polygon points="769.5,279.2 771.6,274.5 773.7,274.5 772,277.9" fill="#e0957a"/>
<polygon points="851,295.25 852.02,294 853.72,294.25 854.4,295.0 853.89,296.5 852.1899999999999,296.375" fill="#e0957a"/>
<polygon points="920.1,336 924,334.7 929.3,340 926,344.4 921,342" fill="#d4716b"/>
<line x1="773.3" y1="283.8" x2="777" y2="282.1" stroke-width="1"/>
<rect x="1358" y="331" width="2" height="2" fill="#555" stroke="none"/>
</g></svg>
<!--/MAP-->
</body></html>
